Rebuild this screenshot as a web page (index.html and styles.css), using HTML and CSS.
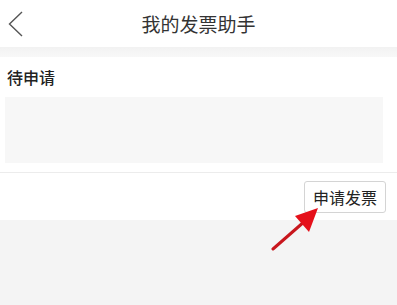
FILE: index.html
```html
<!DOCTYPE html>
<html lang="zh-CN">
<head>
  <meta charset="UTF-8">
  <meta name="viewport" content="width=device-width, initial-scale=1.0">
  <title>我的发票助手</title>
  <link rel="stylesheet" href="styles.css">
</head>
<body>
  <div id="page">
    <div class="header">
      <div class="back">
        <svg width="16" height="28" viewBox="0 0 16 28">
          <polyline points="14,2 1.5,14 14,26" fill="none" stroke="#555" stroke-width="1.4"/>
        </svg>
      </div>
      <div class="title">我的发票助手</div>
      <div></div>
    </div>
    <div class="gap"></div>
    <div class="section">
      <div class="section-title">待申请</div>
      <div class="empty-box"></div>
    </div>
    <div class="action-row">
      <button class="apply-btn">申请发票</button>
    </div>
    <div class="footer"></div>

    <!-- 红色箭头标注 -->
    <svg class="arrow" width="60" height="52" viewBox="0 0 60 52">
      <line x1="2" y1="48" x2="34" y2="20" stroke="#c8161d" stroke-width="3" stroke-linecap="round"/>
      <polygon points="47,7 24,15 38,31" fill="#e5101a"/>
    </svg>
  </div>
</body>
</html>
```

FILE: styles.css
```css
body {
  margin: 0;
  background: #f4f4f4;
  font-family: "Noto Sans CJK SC", "Noto Sans", sans-serif;
}

#page {
  position: relative;
  width: 397px;
  height: 305px;
  overflow: hidden;
}

.header {
  display: grid;
  grid-template-columns: 40px 1fr 40px;
  align-items: center;
  height: 47px;
  background: #fff;
}

.back {
  display: flex;
  align-items: center;
  padding-left: 8px;
  padding-top: 1px;
}

.title {
  text-align: center;
  font-size: 19px;
  color: #333;
}

.gap {
  height: 10px;
  background: linear-gradient(#f2f2f2, #f8f8f8);
}

.section {
  background: #fff;
  padding: 7px 14px 9px 5px;
  border-bottom: 1px solid #ececec;
}

.section-title {
  font-size: 16px;
  font-weight: 500;
  color: #222;
  line-height: 26px;
  padding-left: 2px;
  margin-bottom: 7px;
}

.empty-box {
  height: 66px;
  background: #f7f7f7;
}

.action-row {
  display: flex;
  justify-content: flex-end;
  background: #fff;
  height: 47px;
  padding: 8px 11px 0 0;
  box-sizing: border-box;
}

.apply-btn {
  width: 82px;
  height: 32px;
  padding: 0;
  background: #fff;
  border: 1px solid #d4d4d4;
  border-radius: 3px;
  font-family: inherit;
  font-size: 16px;
  color: #222;
}

.footer {
  height: 90px;
  background: #f4f4f4;
}

.arrow {
  position: absolute;
  left: 271px;
  top: 201px;
}
```
